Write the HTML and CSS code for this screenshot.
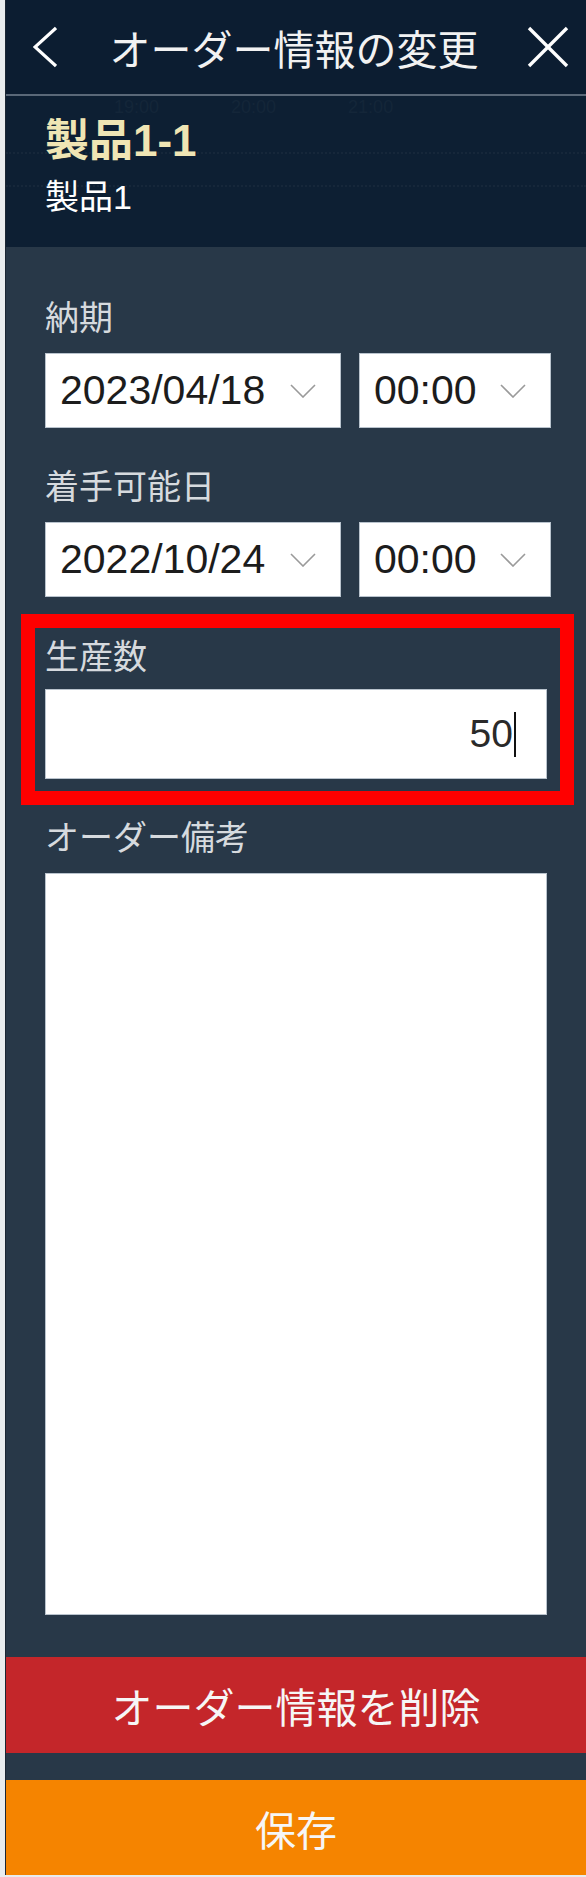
FILE: index.html
```html
<!DOCTYPE html>
<html lang="ja">
<head>
  <meta charset="UTF-8">
  <title>オーダー情報の変更</title>
  <link rel="stylesheet" href="styles.css">
</head>
<body>

<div class="panel">

  <div class="header">
    <svg class="icon-back" width="24" height="42" viewBox="0 0 24 42">
      <polyline points="23,2 2,21 23,40" fill="none" stroke="#ffffff" stroke-width="3.2"/>
    </svg>
    <h1>オーダー情報の変更</h1>
    <svg class="icon-close" width="42" height="42" viewBox="0 0 42 42">
      <line x1="2" y1="2" x2="40" y2="40" stroke="#ffffff" stroke-width="3.4"/>
      <line x1="40" y1="2" x2="2" y2="40" stroke="#ffffff" stroke-width="3.4"/>
    </svg>
  </div>

  <div class="product">
    <div class="ghost">
      <span>19:00</span><span>20:00</span><span>21:00</span>
    </div>
    <div class="dots dots-1"></div>
    <div class="dots dots-2"></div>
    <div class="product-name">製品1-1</div>
    <div class="product-sub">製品1</div>
  </div>

  <div class="form">
    <label>納期</label>
    <div class="row">
      <div class="select">2023/04/18
        <svg width="26" height="14" viewBox="0 0 26 14"><polyline points="1,1 13,13 25,1" fill="none" stroke="#9a9a9a" stroke-width="1.6"/></svg>
      </div>
      <div class="select">00:00
        <svg width="26" height="14" viewBox="0 0 26 14"><polyline points="1,1 13,13 25,1" fill="none" stroke="#9a9a9a" stroke-width="1.6"/></svg>
      </div>
    </div>

    <label class="gap-top">着手可能日</label>
    <div class="row">
      <div class="select">2022/10/24
        <svg width="26" height="14" viewBox="0 0 26 14"><polyline points="1,1 13,13 25,1" fill="none" stroke="#9a9a9a" stroke-width="1.6"/></svg>
      </div>
      <div class="select">00:00
        <svg width="26" height="14" viewBox="0 0 26 14"><polyline points="1,1 13,13 25,1" fill="none" stroke="#9a9a9a" stroke-width="1.6"/></svg>
      </div>
    </div>

    <div class="highlight">
      <label>生産数</label>
      <div class="number">50<span class="caret"></span></div>
    </div>

    <label class="after-highlight">オーダー備考</label>
    <textarea class="memo"></textarea>
  </div>

  <button class="btn-delete">オーダー情報を削除</button>
  <div class="spacer"></div>
  <button class="btn-save">保存</button>

</div>

</body>
</html>
```

FILE: styles.css
```css
html, body {
  margin: 0;
  padding: 0;
}

body {
  background: #e9ecee;
  font-family: "Liberation Sans", "Noto Sans CJK JP", sans-serif;
  height: 1877px;
}

.panel {
  margin-left: 5px;
  background: #283848;
  border-left: 1px solid #1b2633;
}

.header {
  height: 94px;
  background: #0c1d31;
  border-bottom: 2px solid #5a6878;
  display: flex;
  align-items: center;
  padding: 0 17px 0 27px;
}

.header h1 {
  flex: 1;
  margin: 0;
  text-align: center;
  font-size: 41px;
  font-weight: normal;
  color: #f2f2f2;
  padding-left: 4px;
}

.product {
  position: relative;
  height: 151px;
  box-sizing: border-box;
  padding: 21px 0 0 39px;
  background: #0d1f33;
  overflow: hidden;
}

/* timeline behind the panel, barely visible */
.ghost {
  position: absolute;
  top: 1px;
  left: 108px;
  display: flex;
  gap: 72px;
  font-size: 18px;
  line-height: 20px;
  color: #142639;
}

.dots {
  position: absolute;
  left: 0;
  right: 0;
  border-top: 2px dotted #16273a;
}

.dots-1 { top: 56px; }
.dots-2 { top: 89px; }

.product-name {
  position: relative;
  font-size: 44px;
  line-height: 48px;
  font-weight: bold;
  color: #efe5b4;
}

.product-sub {
  position: relative;
  margin-top: 12px;
  font-size: 34px;
  line-height: 40px;
  color: #ffffff;
}

.form {
  padding: 51px 0 42px 39px;
}

label {
  display: block;
  font-size: 34px;
  line-height: 40px;
  color: #d6dade;
  margin-bottom: 15px;
}

.gap-top {
  margin-top: 39px;
}

.row {
  display: grid;
  grid-template-columns: 296px 192px;
  gap: 18px;
}

.select {
  height: 75px;
  box-sizing: border-box;
  background: #fff;
  border: 1px solid #b9c3cd;
  display: flex;
  align-items: center;
  justify-content: space-between;
  padding: 0 24px 0 14px;
  font-size: 41px;
  color: #1c1c1c;
}

.highlight {
  margin: 17px 12px 0 -24px;
  border: 14px solid #ff0000;
  padding: 9px 13px 12px 10px;
}

.highlight label {
  margin-bottom: 12px;
}

.number {
  height: 90px;
  box-sizing: border-box;
  background: #fff;
  border: 1px solid #b9c3cd;
  display: flex;
  align-items: center;
  justify-content: flex-end;
  padding-right: 30px;
  font-size: 39px;
  color: #2a2a2a;
}

.caret {
  display: inline-block;
  width: 2px;
  height: 45px;
  background: #111;
  margin-left: 1px;
}

.after-highlight {
  margin-top: 13px;
}

.memo {
  display: block;
  width: 502px;
  height: 742px;
  box-sizing: border-box;
  border: 1px solid #b9c3cd;
  background: #fff;
  resize: none;
  margin: 0;
  padding: 0;
}

button {
  display: block;
  width: 100%;
  border: none;
  margin: 0;
  font-family: inherit;
  font-size: 41px;
  color: #f6f6f6;
  cursor: pointer;
}

.btn-delete {
  height: 96px;
  background: #c4262a;
}

.spacer {
  height: 27px;
}

.btn-save {
  height: 95px;
  background: #f58400;
}
```
